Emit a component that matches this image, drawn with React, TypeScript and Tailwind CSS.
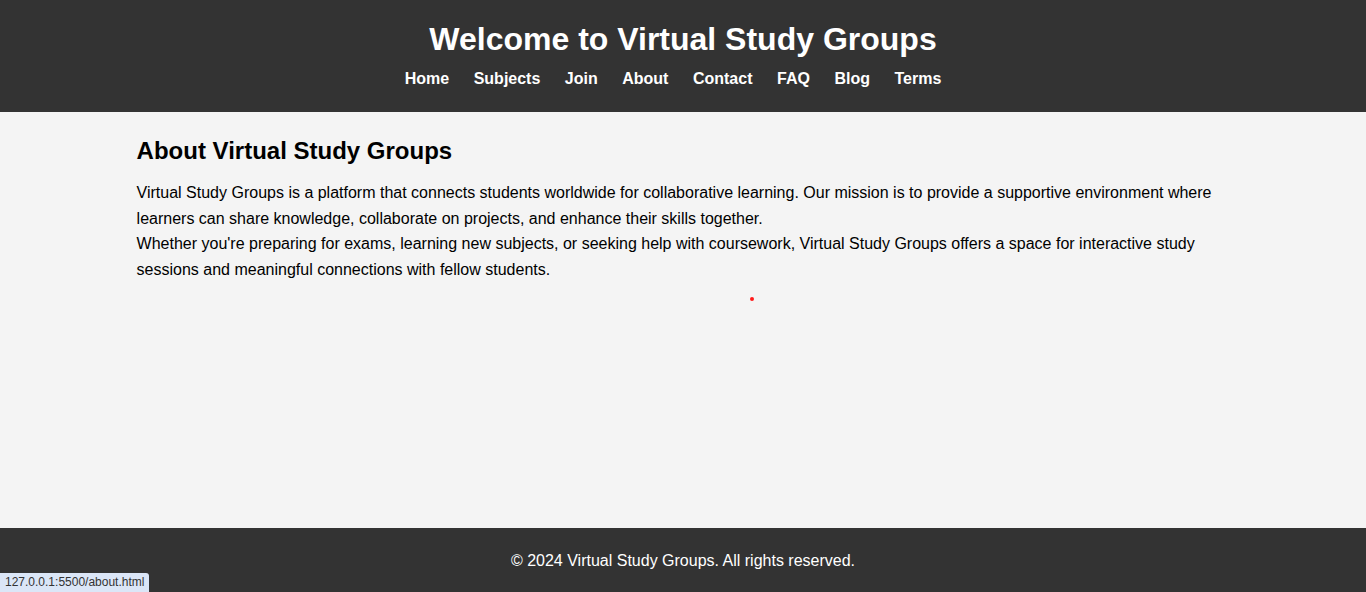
const navLinks = ["Home", "Subjects", "Join", "About", "Contact", "FAQ", "Blog", "Terms"];

export default function App() {
  return (
    <div className="relative flex min-h-screen flex-col bg-[#f4f4f4] font-['Liberation_Sans',Arial,sans-serif] text-black">
      {/* Header */}
      <header className="h-[112px] bg-[#333333] pt-[21px] text-center text-white">
        <h1 className="text-[32px] font-bold leading-[37px]">Welcome to Virtual Study Groups</h1>
        <nav className="mt-[12px] flex justify-center gap-[24.5px] pr-[20px] text-[16px] font-bold leading-[18px]">
          {navLinks.map((link) => (
            <a key={link} href="#" className="text-white">
              {link}
            </a>
          ))}
        </nav>
      </header>

      {/* Main */}
      <main className="flex-1">
        <div className="mx-auto w-[80%] pt-[25px]">
          <h2 className="text-[24px] font-bold leading-[28px]">About Virtual Study Groups</h2>
          <p className="mt-[15px] text-[16px] leading-[25.6px]">
            Virtual Study Groups is a platform that connects students worldwide for collaborative learning. Our mission is to provide a supportive environment where learners can share knowledge, collaborate on projects, and enhance their skills together.
          </p>
          <p className="text-[16px] leading-[25.6px]">
            Whether you're preparing for exams, learning new subjects, or seeking help with coursework, Virtual Study Groups offers a space for interactive study sessions and meaningful connections with fellow students.
          </p>
        </div>
      </main>

      {/* Footer */}
      <footer className="flex h-[64px] items-center justify-center bg-[#333333] pt-[2px] text-[16px] text-white">
        © 2024 Virtual Study Groups. All rights reserved.
      </footer>

      {/* overlays */}
      <div className="absolute left-[750px] top-[297px] h-[4px] w-[4px] rounded-full bg-[#ff1a1a]" />
      <div className="absolute bottom-0 left-0 rounded-tr-[3px] bg-[#dbe6f7] px-[5px] py-[2px] text-[12px] leading-[15px] text-[#333]">
        127.0.0.1:5500/about.html
      </div>
    </div>
  );
}
